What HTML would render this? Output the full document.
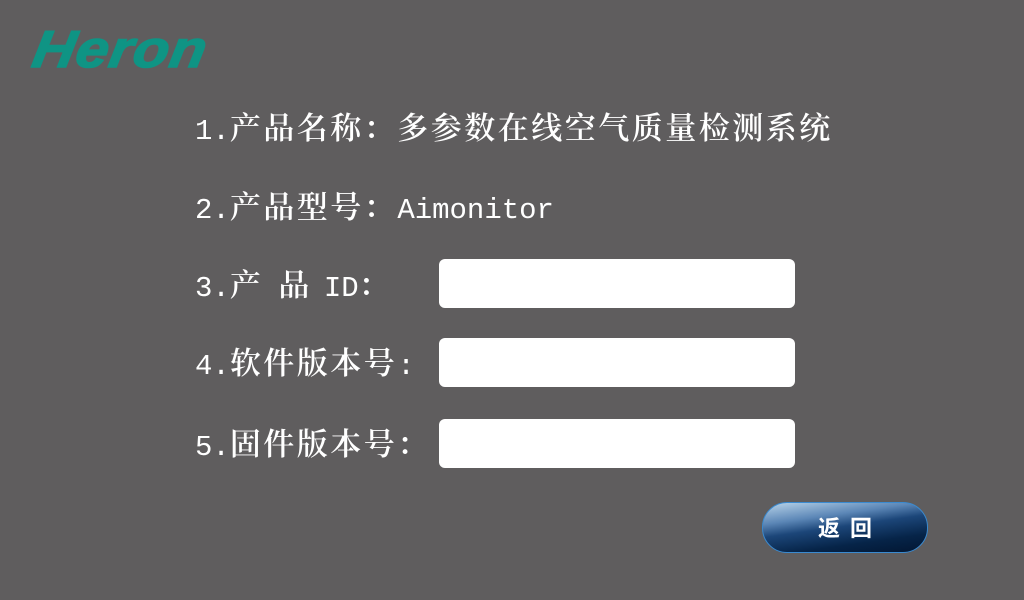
<!DOCTYPE html>
<html><head><meta charset="utf-8"><style>
body{margin:0;width:1024px;height:600px;background:#5f5d5e;position:relative;overflow:hidden;font-family:"Liberation Mono","Noto Serif CJK SC",monospace;color:#fff}
.t{position:absolute;left:195px;font-size:29px;line-height:36px;white-space:nowrap}
.c{font-size:31px;letter-spacing:2.5px;font-family:"Noto Serif CJK SC",serif;font-weight:600}
.b{position:absolute;left:439px;width:356px;height:49px;background:#fff;border-radius:6px}
.logo{position:absolute;left:38px;top:24px;font-family:"Liberation Sans",sans-serif;font-weight:bold;font-style:italic;font-size:52px;color:#0f9484;letter-spacing:1px;line-height:52px;transform:skewX(-10deg) scaleX(1.12);transform-origin:left top;-webkit-text-stroke:1.5px #0f9484}
.btn{position:absolute;left:762px;top:502px;width:164px;height:49px;border-radius:25px;border:1px solid #3a8ad0;background:linear-gradient(172deg,#b9d4ea 0%,#5b86b6 30%,#1c4679 48%,#062448 75%,#021632 100%);color:#fff;font-family:"Noto Sans CJK SC",sans-serif;font-weight:bold;font-size:22px;text-align:center;line-height:49px;letter-spacing:10px;text-indent:10px}
</style></head><body>
<div class="logo">Heron</div>
<div class="t" style="top:108px">1.<span class="c">产品名称：多参数在线空气质量检测系统</span></div>
<div class="t" style="top:187px">2.<span class="c">产品型号：</span>Aimonitor</div>
<div class="t" style="top:265px">3.<span class="c">产<span style="margin-left:15px">品</span></span><span style="margin-left:12px">ID</span><span class="c">：</span></div>
<div class="t" style="top:343px">4.<span class="c">软件版本号</span>:</div>
<div class="t" style="top:424px">5.<span class="c">固件版本号：</span></div>
<div class="b" style="top:259px"></div>
<div class="b" style="top:338px"></div>
<div class="b" style="top:419px"></div>
<div class="btn">返回</div>
</body></html>
